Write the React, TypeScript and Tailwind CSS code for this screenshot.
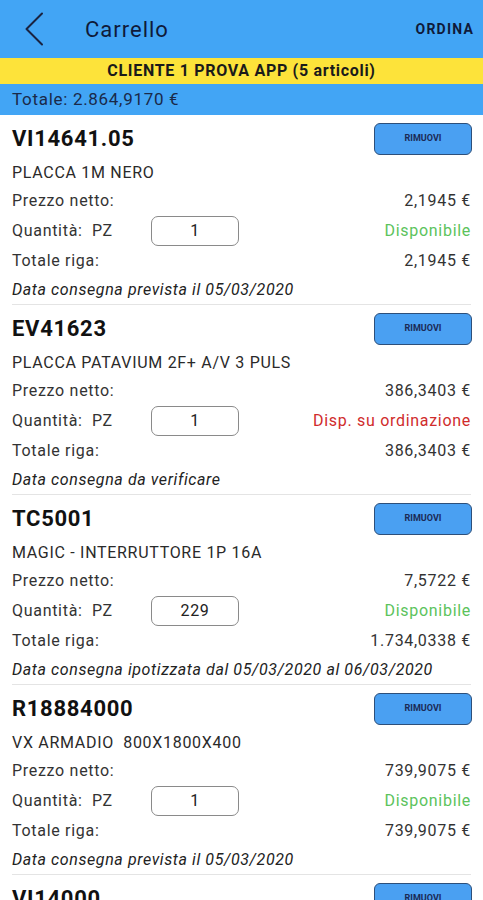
import React from "react";

type Item = {
  code: string;
  name: string;
  price: string;
  qty: string;
  status: "ok" | "order";
  total: string;
  note: string;
};

const items: Item[] = [
  {
    code: "VI14641.05",
    name: "PLACCA 1M NERO",
    price: "2,1945 €",
    qty: "1",
    status: "ok",
    total: "2,1945 €",
    note: "Data consegna prevista il 05/03/2020",
  },
  {
    code: "EV41623",
    name: "PLACCA PATAVIUM 2F+ A/V 3 PULS",
    price: "386,3403 €",
    qty: "1",
    status: "order",
    total: "386,3403 €",
    note: "Data consegna da verificare",
  },
  {
    code: "TC5001",
    name: "MAGIC - INTERRUTTORE 1P 16A",
    price: "7,5722 €",
    qty: "229",
    status: "ok",
    total: "1.734,0338 €",
    note: "Data consegna ipotizzata dal 05/03/2020 al 06/03/2020",
  },
  {
    code: "R18884000",
    name: "VX ARMADIO  800X1800X400",
    price: "739,9075 €",
    qty: "1",
    status: "ok",
    total: "739,9075 €",
    note: "Data consegna prevista il 05/03/2020",
  },
  {
    code: "VI14000",
    name: "",
    price: "",
    qty: "1",
    status: "ok",
    total: "",
    note: "",
  },
];

function CartItem({ item }: { item: Item }) {
  return (
    <div className="mx-3 h-[190px] border-b border-[#e4e4e4]">
      <div className="flex h-[45px] items-center justify-between pt-[2px]">
        <span className="text-[22px] font-bold leading-none tracking-[0.7px] text-[#111]">{item.code}</span>
        <button className="mr-[-1px] h-[32px] w-[98px] rounded-[6px] border border-[#2d4f7a] bg-[#4aa0f2] text-[9px] font-bold text-[#1b2a55]">
          RIMUOVI
        </button>
      </div>
      <div className="flex h-[26px] items-center whitespace-pre text-[16px] tracking-[0.7px] text-[#2a2a2a]">{item.name}</div>
      <div className="flex h-[30px] items-center justify-between text-[16px] tracking-[0.7px] text-[#333]">
        <span>Prezzo netto:</span>
        <span>{item.price}</span>
      </div>
      <div className="flex h-[30px] items-center justify-between text-[16px] tracking-[0.7px] text-[#333]">
        <div className="flex items-center">
          <span className="w-[80px]">Quantità:</span>
          <span className="w-[59px]">PZ</span>
          <div className="flex h-[30px] w-[88px] items-center justify-center rounded-[7px] border border-[#8a8a8a] text-[16px] text-[#222]">
            {item.qty}
          </div>
        </div>
        {item.status === "ok" ? (
          <span className="text-[#5cc35c]">Disponibile</span>
        ) : (
          <span className="text-[#d02c2c]">Disp. su ordinazione</span>
        )}
      </div>
      <div className="flex h-[30px] items-center justify-between text-[16px] tracking-[0.7px] text-[#333]">
        <span>Totale riga:</span>
        <span>{item.total}</span>
      </div>
      <div className="flex h-[28px] items-center text-[16px] italic tracking-[0.6px] text-[#222]">{item.note}</div>
    </div>
  );
}

export default function App() {
  return (
    <div className="h-[900px] w-[483px] overflow-hidden bg-white font-['Roboto',sans-serif]">
      <header className="flex h-[58px] items-center bg-[#42a5f5] pr-[9px]">
        <div className="flex w-[85px] items-center pl-[24px]">
          <svg width="20" height="34" viewBox="0 0 20 34" fill="none">
            <path d="M18 1.5 L2.5 17 L18 32.5" stroke="#1a2340" strokeWidth="2" strokeLinecap="round" strokeLinejoin="round" />
          </svg>
        </div>
        <span className="flex-1 text-[22px] tracking-[1px] text-[#0f1a3a]">Carrello</span>
        <span className="text-[14px] font-bold tracking-[1.2px] text-[#0f1a3a]">ORDINA</span>
      </header>
      <div className="flex h-[26px] items-center justify-center bg-[#fde33a] text-[16px] font-bold tracking-[0.7px] text-[#1a1a1a]">
        CLIENTE 1 PROVA APP (5 articoli)
      </div>
      <div className="flex h-[31px] items-center bg-[#42a5f5] px-3 text-[17px] tracking-[0.7px] text-[#1a2a4a]">
        Totale: 2.864,9170 €
      </div>
      {items.map((it) => (
        <CartItem key={it.code} item={it} />
      ))}
    </div>
  );
}
